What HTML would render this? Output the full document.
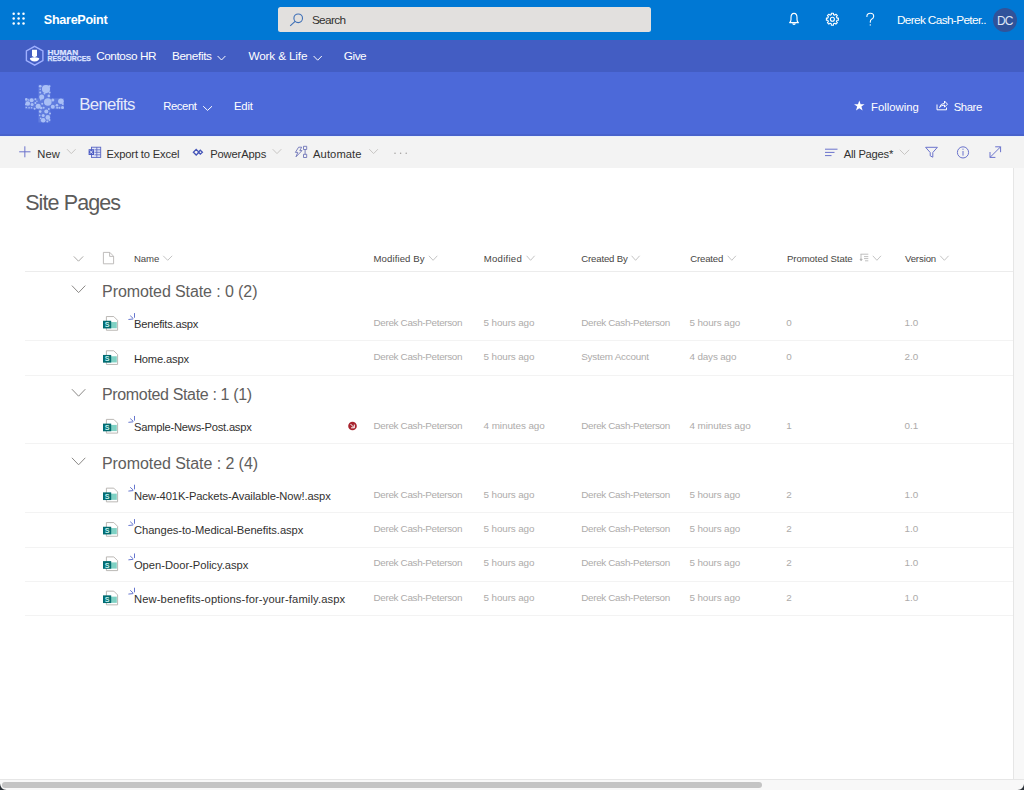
<!DOCTYPE html>
<html><head><meta charset="utf-8">
<style>
*{margin:0;padding:0;box-sizing:border-box}
html,body{width:1024px;height:790px;overflow:hidden;background:#fff;font-family:"Liberation Sans",sans-serif}
.t{position:absolute;white-space:nowrap;line-height:1;font-family:"Liberation Sans",sans-serif}
.b{position:absolute}
svg{position:absolute;overflow:visible}
</style></head><body>
<div class=b style="left:0;top:0;width:1024px;height:40px;background:#0078d4"></div>
<div class=b style="left:0;top:40px;width:1024px;height:32px;background:#435dc3"></div>
<div class=b style="left:0;top:72px;width:1024px;height:64px;background:#4c69d9"></div>
<div class=b style="left:0;top:134px;width:1024px;height:2px;background:#4862cc"></div>
<div class=b style="left:0;top:136px;width:1024px;height:1px;background:#eaf1fa"></div>
<div class=b style="left:0;top:137px;width:1024px;height:31px;background:#f3f3f3"></div>
<div class=b style="left:277.5px;top:6.5px;width:373.8px;height:25.2px;background:#e2e0de;border-radius:2.5px"></div>
<div class=b style="left:992.6px;top:7.8px;width:24px;height:24px;border-radius:50%;background:#30539a"></div>
<!-- list lines -->
<div class=b style="left:25px;top:270.5px;width:988px;height:1px;background:#ececec"></div>
<div class=b style="left:25px;top:340px;width:988px;height:1px;background:#f3f3f3"></div>
<div class=b style="left:25px;top:374.5px;width:988px;height:1px;background:#f3f3f3"></div>
<div class=b style="left:25px;top:442.5px;width:988px;height:1px;background:#f3f3f3"></div>
<div class=b style="left:25px;top:512px;width:988px;height:1px;background:#f3f3f3"></div>
<div class=b style="left:25px;top:546.5px;width:988px;height:1px;background:#f3f3f3"></div>
<div class=b style="left:25px;top:581px;width:988px;height:1px;background:#f3f3f3"></div>
<div class=b style="left:25px;top:615px;width:988px;height:1px;background:#f3f3f3"></div>
<!-- scrollbars -->
<div class=b style="left:1013px;top:168px;width:1px;height:611px;background:#e6e6e6"></div>
<div class=b style="left:1014px;top:168px;width:10px;height:622px;background:#f8f8f8"></div>
<div class=b style="left:0;top:779px;width:1024px;height:11px;background:#f8f8f8;border-top:1px solid #e6e6e6"></div>
<div class=b style="left:2px;top:782px;width:760px;height:6px;background:#c4c4c4;border-radius:3px"></div>
<svg style="left:0;top:0" width="1024" height="790" viewBox="0 0 1024 790">
 <path d="M0 783.5 Q0.5 789.5 6.5 790 H0 Z" fill="#2b3137"/>
 <path d="M1024 784 Q1023.5 789.5 1017.5 790 H1024 Z" fill="#2b3137"/>
</svg>
<svg style="left:0;top:0" width="1024" height="790" viewBox="0 0 1024 790">
 <!-- waffle -->
 <g fill="#fff">
  <circle cx="13.7" cy="13.8" r="1.25"/><circle cx="18.6" cy="13.8" r="1.25"/><circle cx="23.5" cy="13.8" r="1.25"/>
  <circle cx="13.7" cy="18.6" r="1.25"/><circle cx="18.6" cy="18.6" r="1.25"/><circle cx="23.5" cy="18.6" r="1.25"/>
  <circle cx="13.7" cy="23.4" r="1.25"/><circle cx="18.6" cy="23.4" r="1.25"/><circle cx="23.5" cy="23.4" r="1.25"/>
 </g>
 <!-- search icon -->
 <g fill="none" stroke="#3d6fb6" stroke-width="1.1">
  <circle cx="298.2" cy="18.3" r="4.3"/>
  <line x1="295.1" y1="21.4" x2="290.2" y2="25.8"/>
 </g>
 <!-- bell -->
 <g fill="none" stroke="#fff" stroke-width="1.15" stroke-linejoin="round">
  <path d="M789.6 22.6 Q791 21.6 791 19.6 V17.6 Q791 13.4 794 13.4 Q797 13.4 797 17.6 V19.6 Q797 21.6 798.4 22.6 Z"/>
  <path d="M792.6 23.4 Q794 25.4 795.4 23.4"/>
 </g>
 <!-- gear -->
 <g fill="none" stroke="#fff" stroke-width="1.1" stroke-linejoin="round">
  <path d="M836.97 18.10 L838.41 18.15 L838.41 20.25 L836.97 20.30 L836.41 21.66 L837.39 22.71 L835.91 24.19 L834.86 23.21 L833.50 23.77 L833.45 25.21 L831.35 25.21 L831.30 23.77 L829.94 23.21 L828.89 24.19 L827.41 22.71 L828.39 21.66 L827.83 20.30 L826.39 20.25 L826.39 18.15 L827.83 18.10 L828.39 16.74 L827.41 15.69 L828.89 14.21 L829.94 15.19 L831.30 14.63 L831.35 13.19 L833.45 13.19 L833.50 14.63 L834.86 15.19 L835.91 14.21 L837.39 15.69 L836.41 16.74 Z"/>
  <circle cx="832.4" cy="19.2" r="2"/>
 </g>
 <!-- question -->
 <g fill="none" stroke="#fff" stroke-width="1.1" stroke-linecap="round">
  <path d="M866.9 16.4 Q866.9 13.3 870.3 13.3 Q873.7 13.3 873.7 16.3 Q873.7 18.2 871.6 19.3 Q870.3 20 870.3 21.8 V22.3"/>
 </g>
 <circle cx="870.3" cy="24.9" r="0.7" fill="#fff"/>
 <!-- HR logo -->
 <g>
  <path d="M34.65 46.4 L42.9 51 L42.9 60.6 L34.65 65.2 L26.4 60.6 L26.4 51 Z" fill="none" stroke="#9fb0ff" stroke-width="1.4"/>
  <path d="M32 49.8 h5 v6.2 l-2.5 1.5 l-2.5 -1.5 z" fill="#fff"/>
  <path d="M29.8 58.2 Q34.6 56.4 39.3 58.2 Q39 61.2 34.6 61.4 Q30.2 61.2 29.8 58.2 Z" fill="#fff"/>
 </g>
 <text x="47.5" y="54.7" font-family="Liberation Sans" font-weight="700" font-size="7.4" fill="#dde3ff" stroke="#dde3ff" stroke-width="0.25" textLength="30.8" lengthAdjust="spacingAndGlyphs">HUMAN</text>
 <text x="47.5" y="61" font-family="Liberation Sans" font-weight="700" font-size="7" fill="#dde3ff" stroke="#dde3ff" stroke-width="0.25" textLength="43.3" lengthAdjust="spacingAndGlyphs">RESOURCES</text>
 <!-- hub chevrons -->
 <g fill="none" stroke="#fff" stroke-width="1">
  <path d="M217.6 56 L221.5 60 L225.4 56"/>
  <path d="M313.6 56 L317.7 60.2 L321.8 56"/>
  <path d="M203.2 106.2 L207.6 110.4 L212 106.2"/>
 </g>
 <!-- cross logo -->
 <path d="M38.4 84.8 H50.3 V98.2 H64 V109.3 H50.3 V122.5 H38.4 V109.3 H25 V98.2 H38.4 Z" fill="#a7bdf4" opacity="0.22"/>
 <g fill="#a9bff6">
<circle cx="46.0" cy="89.1" r="4.05"/>
<circle cx="40.2" cy="86.3" r="1.3"/>
<circle cx="40.2" cy="89.3" r="0.8"/>
<circle cx="40.2" cy="92.6" r="1"/>
<circle cx="48.8" cy="95.9" r="1.3"/>
<circle cx="41.7" cy="96.9" r="2.5"/>
<circle cx="47.8" cy="102" r="3.8"/>
<circle cx="60.9" cy="101.2" r="2.8"/>
<circle cx="52.8" cy="99.9" r="1.5"/>
<circle cx="52.8" cy="106.8" r="2"/>
<circle cx="56.9" cy="105.3" r="1.3"/>
<circle cx="57.1" cy="107.8" r="1"/>
<circle cx="59.4" cy="107.8" r="1"/>
<circle cx="62.5" cy="107.5" r="1.5"/>
<circle cx="31.6" cy="100.2" r="2"/>
<circle cx="26.3" cy="99.4" r="1.3"/>
<circle cx="27.8" cy="103.5" r="2.3"/>
<circle cx="32.1" cy="104.5" r="1.5"/>
<circle cx="26.3" cy="107.5" r="0.8"/>
<circle cx="29.1" cy="107.8" r="0.8"/>
<circle cx="31.6" cy="107.8" r="0.8"/>
<circle cx="35.4" cy="99.2" r="1"/>
<circle cx="35.4" cy="103" r="1"/>
<circle cx="38.2" cy="106.3" r="2.5"/>
<circle cx="34.6" cy="108.8" r="1"/>
<circle cx="41.2" cy="108" r="1.3"/>
<circle cx="40.2" cy="111.6" r="1.3"/>
<circle cx="46.3" cy="111.6" r="2"/>
<circle cx="48.8" cy="109" r="1"/>
<circle cx="43.2" cy="115.6" r="1.5"/>
<circle cx="47.8" cy="117.4" r="2.3"/>
<circle cx="43.2" cy="120.2" r="2.3"/>
<circle cx="47.3" cy="121.5" r="1"/>
<circle cx="40.7" cy="118.4" r="0.8"/>
<circle cx="39.7" cy="115.4" r="0.8"/>
<circle cx="42.2" cy="103.7" r="1"/>
<circle cx="43.7" cy="107.8" r="1"/>
<circle cx="40.7" cy="99.7" r="0.8"/>
<circle cx="36.9" cy="101.2" r="0.8"/>
<circle cx="49.5" cy="86.2" r="1"/>
<circle cx="49.6" cy="92.5" r="1"/>
<circle cx="44.5" cy="93.5" r="1"/>
<circle cx="50" cy="113.5" r="1"/>
<circle cx="49.5" cy="120" r="1"/>
<circle cx="62.8" cy="104" r="1"/>
<circle cx="25.8" cy="104.5" r="0.8"/>
<circle cx="28.5" cy="100" r="0.8"/>
 </g>
 <!-- star -->
 <path d="M859.3 100.4 L860.6 104.2 L864.6 104.2 L861.4 106.6 L862.6 110.6 L859.3 108.2 L856 110.6 L857.2 106.6 L854 104.2 L858 104.2 Z" fill="#fff"/>
 <!-- share icon -->
 <g fill="none" stroke="#fff" stroke-width="1" stroke-linejoin="round">
  <path d="M937 104.5 V109.8 H946.5 V107.5"/>
  <path d="M939.5 107.5 Q940.5 103.5 944.5 103.3 V101 L947.5 104.2 L944.5 107.2 V105 Q941.5 105 939.5 107.5 Z"/>
 </g>
 <!-- command bar icons -->
 <g fill="none" stroke="#6b73cc" stroke-width="1">
  <path d="M19.2 151.8 H30.5 M24.85 146.3 V157.3"/>
 </g>
 <g fill="none" stroke="#c8c6c4" stroke-width="1">
  <path d="M67 149.2 L71.3 153.6 L75.6 149.2"/>
  <path d="M272.7 149.2 L277 153.6 L281.3 149.2"/>
  <path d="M369.3 149.2 L373.6 153.6 L377.9 149.2"/>
  <path d="M899.8 149.8 L904.5 154.5 L909.2 149.8"/>
 </g>
 <!-- excel -->
 <g>
  <rect x="91.5" y="147.2" width="9.2" height="10.2" fill="#dfe3f7" stroke="#5864c2" stroke-width="0.9"/>
  <path d="M94.5 149.8 H100.6 M94.5 152.3 H100.6 M94.5 154.8 H100.6 M96.8 147.2 V157.4" stroke="#5864c2" stroke-width="0.8" fill="none"/>
  <rect x="88.6" y="149.2" width="5.4" height="5.8" fill="#4b5bc4"/>
  <path d="M89.9 150.5 L92.7 153.7 M92.7 150.5 L89.9 153.7" stroke="#fff" stroke-width="0.8"/>
 </g>
 <!-- powerapps -->
 <g fill="none" stroke="#4555b8" stroke-width="1.3">
  <path d="M196.2 149.4 L199 152.2 L196.2 155 L193.4 152.2 Z"/>
  <path d="M200.3 150.2 L202.4 152.2 L200.3 154.2 L198.3 152.2 Z"/>
 </g>
 <!-- automate -->
 <g fill="none" stroke="#6e74b8" stroke-width="0.9" stroke-linejoin="round">
  <path d="M298.6 147.2 L301.7 147.2 L299.8 150.6 L302 150.6 L296 156.8 L297.8 152.4 L295.4 152.4 Z"/>
  <rect x="303.5" y="146.3" width="3.2" height="3.2"/>
  <rect x="303.5" y="154.3" width="3.2" height="3.2"/>
  <path d="M305.1 149.5 V154.3"/>
 </g>
 <!-- more dots -->
 <g fill="#a19f9d">
  <circle cx="395" cy="153.3" r="0.75"/><circle cx="400.6" cy="153.3" r="0.75"/><circle cx="406.2" cy="153.3" r="0.75"/>
 </g>
 <!-- right command icons -->
 <g fill="none" stroke="#6b73cc" stroke-width="1">
  <path d="M825 149.2 H837.5 M825 152.4 H834.5 M825 155.6 H831.5"/>
  <path d="M925.6 147.3 H937.4 L932.8 152.5 V157.2 L930.2 155.8 V152.5 Z" stroke-linejoin="round"/>
  <circle cx="963" cy="152.4" r="5.6"/>
  <path d="M963 151 V155.6"/>
  <path d="M990 157.4 L1000.6 146.8 M995.2 146.8 H1000.6 V152.2 M990 152 V157.4 H995.4"/>
 </g>
 <circle cx="963" cy="149.2" r="0.6" fill="#6b73cc"/>
 <!-- header row icons -->
 <g fill="none" stroke="#a19f9d" stroke-width="0.9">
  <path d="M73.8 256.4 L78.5 261.2 L83.2 256.4"/>
  <path d="M103.4 252.4 H109.8 L113.6 256.2 V263.8 H103.4 Z M109.6 252.4 V256.4 H113.6" stroke="#b8b6b4"/>
 </g>
 <g fill="none" stroke="#bdbdbd" stroke-width="0.9">
  <path d="M163.2 255.8 L167.7 260.3 L172.2 255.8"/>
  <path d="M428.9 255.8 L433.1 260.3 L437.3 255.8"/>
  <path d="M526.6 255.8 L530.6 260.3 L534.6 255.8"/>
  <path d="M631.6 255.8 L635.6 260.3 L639.6 255.8"/>
  <path d="M727.7 255.8 L731.8 260.3 L735.9 255.8"/>
  <path d="M872.8 255.8 L876.9 260.3 L881 255.8"/>
  <path d="M940.2 255.8 L944.4 260.3 L948.6 255.8"/>
 </g>
 <g fill="none" stroke="#b0b0b0" stroke-width="0.8">
  <path d="M860.5 254.2 H868.3 M861 254.2 V259.6 M864 256.6 H868.3 M864 258.6 H868.3 M865 260.8 H868.3"/><path d="M860 259.2 L862.2 259.2 L861.1 260.8 Z" fill="#b0b0b0"/>
 </g>
 <!-- group chevrons -->
 <g fill="none" stroke="#8a8886" stroke-width="1">
  <path d="M71.9 285.6 L78.6 292.6 L85.3 285.6"/>
  <path d="M71.9 389.2 L78.6 396.2 L85.3 389.2"/>
  <path d="M71.9 457.8 L78.6 464.8 L85.3 457.8"/>
 </g>
 <!-- red icon -->
 <circle cx="352.5" cy="426" r="4.3" fill="#a8242e"/>
 <path d="M350.5 424 L354 427.5 M354.3 424.6 V427.8 H351.1" stroke="#fff" stroke-width="1" fill="none"/>
</svg>
<svg style="left:0;top:0" width="1024" height="790" viewBox="0 0 1024 790">
<path d="M106.4 316.55 H113.8 L117.6 320.35 V330.25 H106.4 Z" fill="#fff" stroke="#b3b0ad" stroke-width="0.9"/>
<rect x="111" y="322.05" width="5.8" height="6.2" fill="#7fd1c4"/>
<rect x="103" y="320.75" width="8.2" height="7.7" fill="#036c70"/>
<text x="107.1" y="327.25" font-family="Liberation Sans" font-weight="700" font-size="7.2" fill="#bff0ee" text-anchor="middle">S</text>
</svg>
<svg style="left:0;top:0" width="1024" height="790" viewBox="0 0 1024 790">
<path d="M134.5 313.50 V317.35 M130.5 315.95 L133.1 318.35 M128.8 319.45 L132.6 319.05" fill="none" stroke="#5566c8" stroke-width="0.9" stroke-linecap="round"/>
</svg>
<svg style="left:0;top:0" width="1024" height="790" viewBox="0 0 1024 790">
<path d="M106.4 350.75 H113.8 L117.6 354.55 V364.45 H106.4 Z" fill="#fff" stroke="#b3b0ad" stroke-width="0.9"/>
<rect x="111" y="356.25" width="5.8" height="6.2" fill="#7fd1c4"/>
<rect x="103" y="354.95" width="8.2" height="7.7" fill="#036c70"/>
<text x="107.1" y="361.45" font-family="Liberation Sans" font-weight="700" font-size="7.2" fill="#bff0ee" text-anchor="middle">S</text>
</svg>
<svg style="left:0;top:0" width="1024" height="790" viewBox="0 0 1024 790">
<path d="M106.4 419.40 H113.8 L117.6 423.20 V433.10 H106.4 Z" fill="#fff" stroke="#b3b0ad" stroke-width="0.9"/>
<rect x="111" y="424.90" width="5.8" height="6.2" fill="#7fd1c4"/>
<rect x="103" y="423.60" width="8.2" height="7.7" fill="#036c70"/>
<text x="107.1" y="430.10" font-family="Liberation Sans" font-weight="700" font-size="7.2" fill="#bff0ee" text-anchor="middle">S</text>
</svg>
<svg style="left:0;top:0" width="1024" height="790" viewBox="0 0 1024 790">
<path d="M134.5 416.35 V420.20 M130.5 418.80 L133.1 421.20 M128.8 422.30 L132.6 421.90" fill="none" stroke="#5566c8" stroke-width="0.9" stroke-linecap="round"/>
</svg>
<svg style="left:0;top:0" width="1024" height="790" viewBox="0 0 1024 790">
<path d="M106.4 488.15 H113.8 L117.6 491.95 V501.85 H106.4 Z" fill="#fff" stroke="#b3b0ad" stroke-width="0.9"/>
<rect x="111" y="493.65" width="5.8" height="6.2" fill="#7fd1c4"/>
<rect x="103" y="492.35" width="8.2" height="7.7" fill="#036c70"/>
<text x="107.1" y="498.85" font-family="Liberation Sans" font-weight="700" font-size="7.2" fill="#bff0ee" text-anchor="middle">S</text>
</svg>
<svg style="left:0;top:0" width="1024" height="790" viewBox="0 0 1024 790">
<path d="M134.5 485.10 V488.95 M130.5 487.55 L133.1 489.95 M128.8 491.05 L132.6 490.65" fill="none" stroke="#5566c8" stroke-width="0.9" stroke-linecap="round"/>
</svg>
<svg style="left:0;top:0" width="1024" height="790" viewBox="0 0 1024 790">
<path d="M106.4 522.55 H113.8 L117.6 526.35 V536.25 H106.4 Z" fill="#fff" stroke="#b3b0ad" stroke-width="0.9"/>
<rect x="111" y="528.05" width="5.8" height="6.2" fill="#7fd1c4"/>
<rect x="103" y="526.75" width="8.2" height="7.7" fill="#036c70"/>
<text x="107.1" y="533.25" font-family="Liberation Sans" font-weight="700" font-size="7.2" fill="#bff0ee" text-anchor="middle">S</text>
</svg>
<svg style="left:0;top:0" width="1024" height="790" viewBox="0 0 1024 790">
<path d="M134.5 519.50 V523.35 M130.5 521.95 L133.1 524.35 M128.8 525.45 L132.6 525.05" fill="none" stroke="#5566c8" stroke-width="0.9" stroke-linecap="round"/>
</svg>
<svg style="left:0;top:0" width="1024" height="790" viewBox="0 0 1024 790">
<path d="M106.4 556.90 H113.8 L117.6 560.70 V570.60 H106.4 Z" fill="#fff" stroke="#b3b0ad" stroke-width="0.9"/>
<rect x="111" y="562.40" width="5.8" height="6.2" fill="#7fd1c4"/>
<rect x="103" y="561.10" width="8.2" height="7.7" fill="#036c70"/>
<text x="107.1" y="567.60" font-family="Liberation Sans" font-weight="700" font-size="7.2" fill="#bff0ee" text-anchor="middle">S</text>
</svg>
<svg style="left:0;top:0" width="1024" height="790" viewBox="0 0 1024 790">
<path d="M134.5 553.85 V557.70 M130.5 556.30 L133.1 558.70 M128.8 559.80 L132.6 559.40" fill="none" stroke="#5566c8" stroke-width="0.9" stroke-linecap="round"/>
</svg>
<svg style="left:0;top:0" width="1024" height="790" viewBox="0 0 1024 790">
<path d="M106.4 591.15 H113.8 L117.6 594.95 V604.85 H106.4 Z" fill="#fff" stroke="#b3b0ad" stroke-width="0.9"/>
<rect x="111" y="596.65" width="5.8" height="6.2" fill="#7fd1c4"/>
<rect x="103" y="595.35" width="8.2" height="7.7" fill="#036c70"/>
<text x="107.1" y="601.85" font-family="Liberation Sans" font-weight="700" font-size="7.2" fill="#bff0ee" text-anchor="middle">S</text>
</svg>
<svg style="left:0;top:0" width="1024" height="790" viewBox="0 0 1024 790">
<path d="M134.5 588.10 V591.95 M130.5 590.55 L133.1 592.95 M128.8 594.05 L132.6 593.65" fill="none" stroke="#5566c8" stroke-width="0.9" stroke-linecap="round"/>
</svg>
<div class=t style='left:43.87px;top:14.13px;font-size:12.6px;color:#ffffff;font-weight:700;letter-spacing:-0.298px;'>SharePoint</div>
<div class=t style='left:311.91px;top:15.31px;font-size:11.8px;color:#323130;font-weight:400;letter-spacing:-0.658px;'>Search</div>
<div class=t style='left:896.91px;top:14.81px;font-size:11.8px;color:#ffffff;font-weight:400;letter-spacing:-0.632px;'>Derek Cash-Peter..</div>
<div class=t style='left:996.90px;top:15.34px;font-size:12px;color:#dfe6f5;font-weight:400;letter-spacing:-0.692px;'>DC</div>
<div class=t style='left:96.16px;top:50.51px;font-size:11.8px;color:#ffffff;font-weight:400;letter-spacing:-0.432px;'>Contoso HR</div>
<div class=t style='left:171.91px;top:50.51px;font-size:11.8px;color:#ffffff;font-weight:400;letter-spacing:-0.368px;'>Benefits</div>
<div class=t style='left:248.41px;top:50.81px;font-size:11.8px;color:#ffffff;font-weight:400;letter-spacing:-0.166px;'>Work &amp; Life</div>
<div class=t style='left:343.81px;top:50.81px;font-size:11.8px;color:#ffffff;font-weight:400;letter-spacing:-0.480px;'>Give</div>
<div class=t style='left:79.16px;top:97.28px;font-size:16.8px;color:#e6ebfa;font-weight:300;letter-spacing:-0.631px;'>Benefits</div>
<div class=t style='left:163.19px;top:101.43px;font-size:11.3px;color:#ffffff;font-weight:400;letter-spacing:-0.399px;'>Recent</div>
<div class=t style='left:233.94px;top:101.43px;font-size:11.3px;color:#ffffff;font-weight:400;letter-spacing:-0.141px;'>Edit</div>
<div class=t style='left:871.03px;top:101.73px;font-size:11.3px;color:#ffffff;font-weight:400;letter-spacing:0.008px;'>Following</div>
<div class=t style='left:953.73px;top:101.73px;font-size:11.3px;color:#ffffff;font-weight:400;letter-spacing:-0.410px;'>Share</div>
<div class=t style='left:37.14px;top:148.92px;font-size:11.2px;color:#323130;font-weight:400;letter-spacing:0.202px;'>New</div>
<div class=t style='left:106.44px;top:148.92px;font-size:11.2px;color:#323130;font-weight:400;letter-spacing:-0.157px;'>Export to Excel</div>
<div class=t style='left:210.14px;top:148.92px;font-size:11.2px;color:#323130;font-weight:400;letter-spacing:-0.136px;'>PowerApps</div>
<div class=t style='left:313.04px;top:148.92px;font-size:11.2px;color:#323130;font-weight:400;letter-spacing:0.088px;'>Automate</div>
<div class=t style='left:843.74px;top:148.92px;font-size:11.2px;color:#323130;font-weight:400;letter-spacing:-0.223px;'>All Pages*</div>
<div class=t style='left:25.18px;top:192.80px;font-size:21.5px;color:#5c5b5a;font-weight:300;letter-spacing:-0.901px;'>Site Pages</div>
<div class=t style='left:134.02px;top:254.37px;font-size:9.6px;color:#484644;font-weight:400;letter-spacing:-0.106px;'>Name</div>
<div class=t style='left:373.52px;top:254.37px;font-size:9.6px;color:#484644;font-weight:400;letter-spacing:0.095px;'>Modified By</div>
<div class=t style='left:483.72px;top:254.37px;font-size:9.6px;color:#484644;font-weight:400;letter-spacing:0.250px;'>Modified</div>
<div class=t style='left:581.22px;top:254.37px;font-size:9.6px;color:#484644;font-weight:400;letter-spacing:-0.153px;'>Created By</div>
<div class=t style='left:690.22px;top:254.37px;font-size:9.6px;color:#484644;font-weight:400;letter-spacing:-0.182px;'>Created</div>
<div class=t style='left:787.02px;top:254.37px;font-size:9.6px;color:#484644;font-weight:400;letter-spacing:-0.086px;'>Promoted State</div>
<div class=t style='left:904.92px;top:254.37px;font-size:9.6px;color:#484644;font-weight:400;letter-spacing:-0.119px;'>Version</div>
<div class=t style='left:102.10px;top:283.56px;font-size:16px;color:#5f5e5d;font-weight:300;letter-spacing:-0.097px;'>Promoted State : 0 (2)</div>
<div class=t style='left:102.00px;top:386.96px;font-size:16px;color:#5f5e5d;font-weight:300;letter-spacing:-0.349px;'>Promoted State : 1 (1)</div>
<div class=t style='left:102.00px;top:455.71px;font-size:16px;color:#5f5e5d;font-weight:300;letter-spacing:-0.065px;'>Promoted State : 2 (4)</div>
<div class=t style='left:133.94px;top:319.42px;font-size:11.2px;color:#323130;font-weight:400;letter-spacing:-0.229px;'>Benefits.aspx</div>
<div class=t style='left:373.50px;top:317.92px;font-size:9.9px;color:#adabaa;font-weight:400;letter-spacing:-0.330px;'>Derek Cash-Peterson</div>
<div class=t style='left:483.61px;top:317.92px;font-size:9.9px;color:#adabaa;font-weight:400;letter-spacing:-0.135px;'>5 hours ago</div>
<div class=t style='left:581.21px;top:317.92px;font-size:9.9px;color:#adabaa;font-weight:400;letter-spacing:-0.330px;'>Derek Cash-Peterson</div>
<div class=t style='left:689.50px;top:317.92px;font-size:9.9px;color:#adabaa;font-weight:400;letter-spacing:-0.135px;'>5 hours ago</div>
<div class=t style='left:786.30px;top:317.92px;font-size:9.9px;color:#adabaa;font-weight:400;letter-spacing:-0.008px;'>0</div>
<div class=t style='left:904.50px;top:317.92px;font-size:9.9px;color:#adabaa;font-weight:400;letter-spacing:-0.047px;'>1.0</div>
<div class=t style='left:133.94px;top:353.62px;font-size:11.2px;color:#323130;font-weight:400;letter-spacing:-0.189px;'>Home.aspx</div>
<div class=t style='left:373.50px;top:352.12px;font-size:9.9px;color:#adabaa;font-weight:400;letter-spacing:-0.330px;'>Derek Cash-Peterson</div>
<div class=t style='left:483.61px;top:352.12px;font-size:9.9px;color:#adabaa;font-weight:400;letter-spacing:-0.135px;'>5 hours ago</div>
<div class=t style='left:581.21px;top:352.12px;font-size:9.9px;color:#adabaa;font-weight:400;letter-spacing:-0.230px;'>System Account</div>
<div class=t style='left:689.50px;top:352.12px;font-size:9.9px;color:#adabaa;font-weight:400;letter-spacing:-0.154px;'>4 days ago</div>
<div class=t style='left:786.30px;top:352.12px;font-size:9.9px;color:#adabaa;font-weight:400;letter-spacing:-0.008px;'>0</div>
<div class=t style='left:904.50px;top:352.12px;font-size:9.9px;color:#adabaa;font-weight:400;letter-spacing:-0.047px;'>2.0</div>
<div class=t style='left:133.94px;top:422.27px;font-size:11.2px;color:#323130;font-weight:400;letter-spacing:-0.230px;'>Sample-News-Post.aspx</div>
<div class=t style='left:373.50px;top:420.77px;font-size:9.9px;color:#adabaa;font-weight:400;letter-spacing:-0.330px;'>Derek Cash-Peterson</div>
<div class=t style='left:483.61px;top:420.77px;font-size:9.9px;color:#adabaa;font-weight:400;letter-spacing:-0.073px;'>4 minutes ago</div>
<div class=t style='left:581.21px;top:420.77px;font-size:9.9px;color:#adabaa;font-weight:400;letter-spacing:-0.330px;'>Derek Cash-Peterson</div>
<div class=t style='left:689.50px;top:420.77px;font-size:9.9px;color:#adabaa;font-weight:400;letter-spacing:-0.073px;'>4 minutes ago</div>
<div class=t style='left:786.30px;top:420.77px;font-size:9.9px;color:#adabaa;font-weight:400;letter-spacing:-0.008px;'>1</div>
<div class=t style='left:904.50px;top:420.77px;font-size:9.9px;color:#adabaa;font-weight:400;letter-spacing:-0.047px;'>0.1</div>
<div class=t style='left:133.94px;top:491.02px;font-size:11.2px;color:#323130;font-weight:400;letter-spacing:-0.110px;'>New-401K-Packets-Available-Now!.aspx</div>
<div class=t style='left:373.50px;top:489.52px;font-size:9.9px;color:#adabaa;font-weight:400;letter-spacing:-0.330px;'>Derek Cash-Peterson</div>
<div class=t style='left:483.61px;top:489.52px;font-size:9.9px;color:#adabaa;font-weight:400;letter-spacing:-0.135px;'>5 hours ago</div>
<div class=t style='left:581.21px;top:489.52px;font-size:9.9px;color:#adabaa;font-weight:400;letter-spacing:-0.330px;'>Derek Cash-Peterson</div>
<div class=t style='left:689.50px;top:489.52px;font-size:9.9px;color:#adabaa;font-weight:400;letter-spacing:-0.135px;'>5 hours ago</div>
<div class=t style='left:786.30px;top:489.52px;font-size:9.9px;color:#adabaa;font-weight:400;letter-spacing:-0.008px;'>2</div>
<div class=t style='left:904.50px;top:489.52px;font-size:9.9px;color:#adabaa;font-weight:400;letter-spacing:-0.047px;'>1.0</div>
<div class=t style='left:133.94px;top:525.42px;font-size:11.2px;color:#323130;font-weight:400;letter-spacing:-0.051px;'>Changes-to-Medical-Benefits.aspx</div>
<div class=t style='left:373.50px;top:523.92px;font-size:9.9px;color:#adabaa;font-weight:400;letter-spacing:-0.330px;'>Derek Cash-Peterson</div>
<div class=t style='left:483.61px;top:523.92px;font-size:9.9px;color:#adabaa;font-weight:400;letter-spacing:-0.135px;'>5 hours ago</div>
<div class=t style='left:581.21px;top:523.92px;font-size:9.9px;color:#adabaa;font-weight:400;letter-spacing:-0.330px;'>Derek Cash-Peterson</div>
<div class=t style='left:689.50px;top:523.92px;font-size:9.9px;color:#adabaa;font-weight:400;letter-spacing:-0.135px;'>5 hours ago</div>
<div class=t style='left:786.30px;top:523.92px;font-size:9.9px;color:#adabaa;font-weight:400;letter-spacing:-0.008px;'>2</div>
<div class=t style='left:904.50px;top:523.92px;font-size:9.9px;color:#adabaa;font-weight:400;letter-spacing:-0.047px;'>1.0</div>
<div class=t style='left:133.94px;top:559.77px;font-size:11.2px;color:#323130;font-weight:400;letter-spacing:-0.021px;'>Open-Door-Policy.aspx</div>
<div class=t style='left:373.50px;top:558.27px;font-size:9.9px;color:#adabaa;font-weight:400;letter-spacing:-0.330px;'>Derek Cash-Peterson</div>
<div class=t style='left:483.61px;top:558.27px;font-size:9.9px;color:#adabaa;font-weight:400;letter-spacing:-0.135px;'>5 hours ago</div>
<div class=t style='left:581.21px;top:558.27px;font-size:9.9px;color:#adabaa;font-weight:400;letter-spacing:-0.330px;'>Derek Cash-Peterson</div>
<div class=t style='left:689.50px;top:558.27px;font-size:9.9px;color:#adabaa;font-weight:400;letter-spacing:-0.135px;'>5 hours ago</div>
<div class=t style='left:786.30px;top:558.27px;font-size:9.9px;color:#adabaa;font-weight:400;letter-spacing:-0.008px;'>2</div>
<div class=t style='left:904.50px;top:558.27px;font-size:9.9px;color:#adabaa;font-weight:400;letter-spacing:-0.047px;'>1.0</div>
<div class=t style='left:133.94px;top:594.02px;font-size:11.2px;color:#323130;font-weight:400;letter-spacing:0.126px;'>New-benefits-options-for-your-family.aspx</div>
<div class=t style='left:373.50px;top:592.52px;font-size:9.9px;color:#adabaa;font-weight:400;letter-spacing:-0.330px;'>Derek Cash-Peterson</div>
<div class=t style='left:483.61px;top:592.52px;font-size:9.9px;color:#adabaa;font-weight:400;letter-spacing:-0.135px;'>5 hours ago</div>
<div class=t style='left:581.21px;top:592.52px;font-size:9.9px;color:#adabaa;font-weight:400;letter-spacing:-0.330px;'>Derek Cash-Peterson</div>
<div class=t style='left:689.50px;top:592.52px;font-size:9.9px;color:#adabaa;font-weight:400;letter-spacing:-0.135px;'>5 hours ago</div>
<div class=t style='left:786.30px;top:592.52px;font-size:9.9px;color:#adabaa;font-weight:400;letter-spacing:-0.008px;'>2</div>
<div class=t style='left:904.50px;top:592.52px;font-size:9.9px;color:#adabaa;font-weight:400;letter-spacing:-0.047px;'>1.0</div>
</body></html>
